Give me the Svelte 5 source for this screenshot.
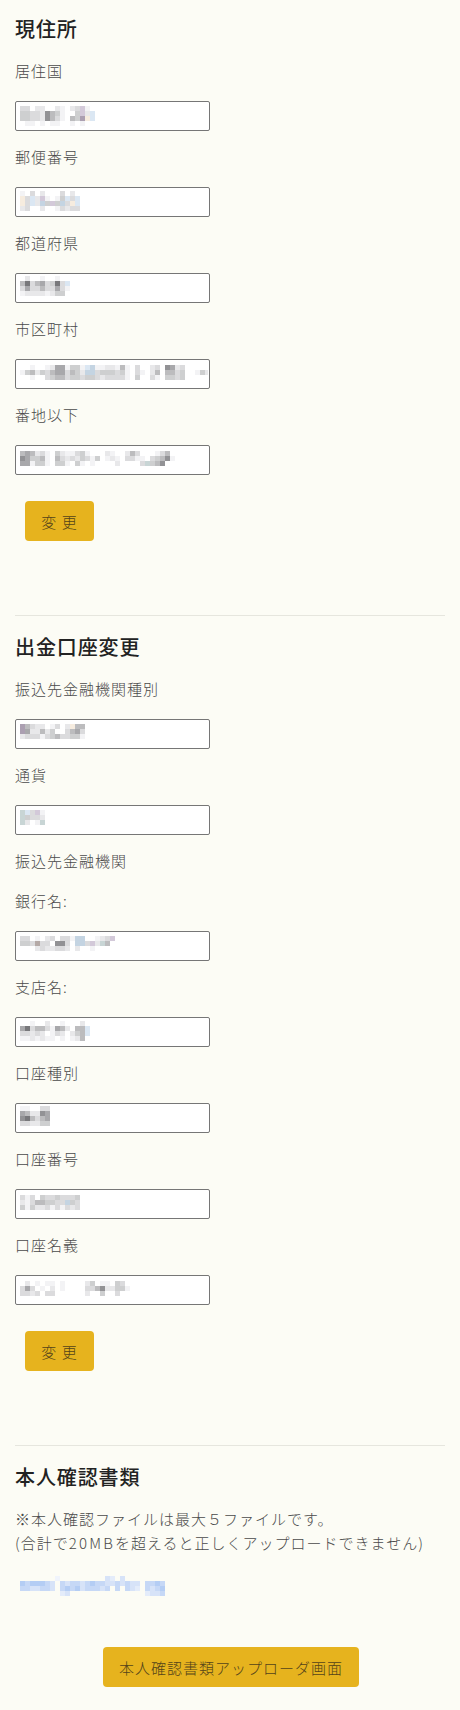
<script>
  const palette = {
    '1': '#f3f3f5', '2': '#e8e8ea', '3': '#dbdbdd', '4': '#cecfd0', '5': '#bcbcbe',
    '6': '#a8a8ab', '7': '#929295', '8': '#78787b', 'b': '#dbe7f3', 'c': '#c4d4e2',
    'y': '#f6ecdf', 'p': '#d3c9d9', 'q': '#ab9fb1', 'g': '#c8d5d5', 'r': '#b5aaa7'
  };
  const bluePalette = { '1': '#f0f4fc', '2': '#e4ecfa', '3': '#d7e3f8', '4': '#c6d8f6', '5': '#b4cdf4' };
  const mosaics = {
    country: { y: 5, rows: ['33.22..21.23p1.', '443327541..4p2b', '443327531.54qyb', '.11.1.11..1.1..'] },
    postal: { y: 4, rows: ['1.3.2...3.2.', 'y3b2p1.14b3b', 'y3b2c4p4c3yb', '23..2..13233'] },
    pref: { y: 3, rows: ['.2..1..1..', '5835634 83b', '3633533631', '1222212 44.'] },
    city: { y: 6, rows: ['..1..126614 41bc11221 51.3..23.7623.....', '14524356635 42cc34443 41.31.25.5534..142', '..1..345534 434 432333 31.4..31.4434.....'] },
    street: { y: 6, rows: ['565231.42113 41...21..253...135.', '764451.532324 314.121.3311.3457 1', '66144 1.441.41 .1....2....3g457.'] },
    bankType: { y: 5, rows: ['q5322.13.2y55', 'q62252 4..3563', '2333134533441'] },
    currency: { y: 5, rows: ['gb3p1', 'g4332', 'g2.1g'] },
    bank: { y: 5, rows: ['33.1.23.331cc..123p', '443r33.773.cc3p2g5', '...23223 32.2..1...'] },
    branch: { y: 4, rows: ['..1..2..1...2.', '68355316 52.55b', '332 32.132.245b', '11212 11.1.125.'] },
    acctType: { y: 3, rows: ['11..33', '652276', '785356', '332244'] },
    acctNo: { y: 6, rows: ['313.43343334', '2135544 33c43', '414223131323'] },
    holder: { y: 6, rows: ['.2.1.11.1....24.11.43.', '3 63.1.2.1....33572244 1', '3323.33......2..4..3..'] },
    file: { y: 0, rows: ['.......1.........32.3........', '5455543.4344345443343433.4454', '4433443.4545344434.4.432.4345', '........23...............2334'] }
  };

  function cells(rows, blue) {
    const out = [];
    rows.forEach((row, r) => {
      [...row.replace(/ /g, '')].forEach((ch, c) => {
        if (ch === '.') return;
        out.push({ x: c * 5, y: r * 5, fill: blue ? bluePalette[ch] : palette[ch] });
      });
    });
    return out;
  }

  const address = [
    { label: '居住国', m: 'country' },
    { label: '郵便番号', m: 'postal' },
    { label: '都道府県', m: 'pref' },
    { label: '市区町村', m: 'city' },
    { label: '番地以下', m: 'street' }
  ];
</script>

{#snippet field(label, m)}
  <p class="label">{label}</p>
  <div class="field">
    <input type="text" readonly aria-label={label} />
    <svg class="mosaic" style="top:{mosaics[m].y}px" width="188" height="25" aria-hidden="true">
      {#each cells(mosaics[m].rows) as c}
        <rect x={c.x} y={c.y} width="5" height="5" fill={c.fill} />
      {/each}
    </svg>
  </div>
{/snippet}

<main>
  <section>
    <h2>現住所</h2>
    {#each address as a}
      {@render field(a.label, a.m)}
    {/each}
    <button class="small">変 更</button>
  </section>

  <hr />

  <section>
    <h2>出金口座変更</h2>
    {@render field('振込先金融機関種別', 'bankType')}
    {@render field('通貨', 'currency')}
    <p class="label tight">振込先金融機関</p>
    {@render field('銀行名:', 'bank')}
    {@render field('支店名:', 'branch')}
    {@render field('口座種別', 'acctType')}
    {@render field('口座番号', 'acctNo')}
    {@render field('口座名義', 'holder')}
    <button class="small">変 更</button>
  </section>

  <hr />

  <section>
    <h2>本人確認書類</h2>
    <p class="note">※本人確認ファイルは最大５ファイルです。<br />(合計で<span class="num">20MB</span>を超えると正しくアップロードできません)</p>
    <svg class="file" width="150" height="20" aria-hidden="true">
      {#each cells(mosaics.file.rows, true) as c}
        <rect x={c.x} y={c.y} width="5" height="5" fill={c.fill} />
      {/each}
    </svg>
    <div class="center">
      <button class="wide">本人確認書類アップローダ画面</button>
    </div>
  </section>
</main>

<style>
  :global(body) {
    margin: 0;
    background: #fcfcf5;
  }
  main {
    box-sizing: border-box;
    width: 460px;
    height: 1710px;
    padding: 15px 15px 0;
    font-family: "Noto Sans CJK JP", "Noto Sans", sans-serif;
    color: #4a4a4a;
  }
  h2 {
    margin: 0 0 16px;
    font-size: 20px;
    line-height: 28px;
    font-weight: 500;
    letter-spacing: 0.9px;
    color: #222;
  }
  .label {
    margin: 0 0 18px;
    font-size: 15px;
    line-height: 24px;
    font-weight: 300;
    letter-spacing: 1px;
  }
  .label.tight {
    margin-bottom: 16px;
  }
  .field {
    position: relative;
    width: 195px;
    height: 30px;
    margin-bottom: 14px;
  }
  input {
    display: block;
    box-sizing: border-box;
    width: 195px;
    height: 30px;
    margin: 0;
    padding: 0 4px;
    border: 1px solid #767676;
    border-radius: 2px;
    background: #fff;
  }
  .mosaic {
    position: absolute;
    left: 5px;
  }
  button {
    display: block;
    height: 40px;
    padding: 0;
    border: 0;
    border-radius: 4px;
    background: #e6b31e;
    font-family: inherit;
    font-size: 15px;
    font-weight: 300;
    letter-spacing: 1px;
    color: #54441a;
  }
  .small {
    width: 69px;
    margin: 26px 0 0 10px;
  }
  hr {
    height: 1px;
    margin: 74px 0 17px;
    border: 0;
    background: #e6e6de;
  }
  .note {
    margin: 1px 0 0;
    font-size: 15px;
    line-height: 24px;
    font-weight: 300;
    letter-spacing: 1px;
  }
  .num {
    letter-spacing: 2.2px;
  }
  .file {
    display: block;
    margin: 21px 0 0 5px;
  }
  .center {
    display: flex;
    justify-content: center;
    margin-top: 51px;
    padding-left: 2px;
  }
  .wide {
    width: 256px;
  }
</style>
